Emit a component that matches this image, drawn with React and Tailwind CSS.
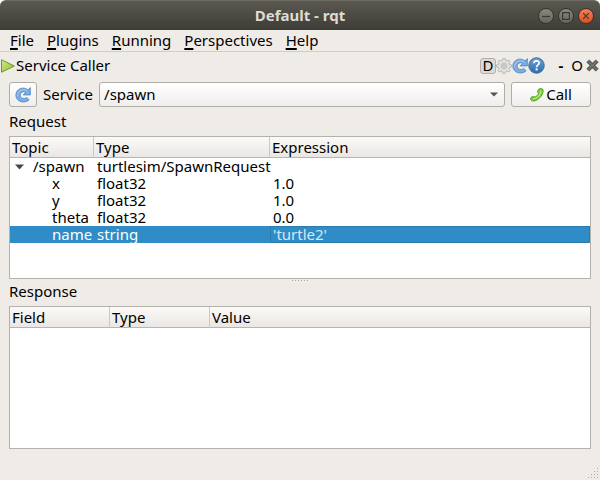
import clsx from "clsx";

const menus = ["File", "Plugins", "Running", "Perspectives", "Help"];

const requestRows = [
  { topic: "x", type: "float32", expression: "1.0" },
  { topic: "y", type: "float32", expression: "1.0" },
  { topic: "theta", type: "float32", expression: "0.0" },
  { topic: "name", type: "string", expression: "'turtle2'", selected: true },
];

const ReloadIcon = () => (
  <svg width="16" height="16" viewBox="0 0 16 16" aria-hidden="true">
    <path
      d="M15.300.6v7.300H8.200l2.500-2.400C8.600 3.900 5.200 5.100 5.200 8.200c0 3.300 4 4.300 6.600 2.300l2.300 2.400C9.300 17 .9 14.800.9 8.200.9 1.500 8.700-.9 13 3z"
      fill="#7cafe0"
      stroke="#4f89c6"
      strokeWidth="0.900"
      strokeLinejoin="round"
    />
    <path
      d="M2.600 9.500C1.700 4 7.500.9 12.200 3.900"
      fill="none"
      stroke="#a9cdf0"
      strokeWidth="1"
    />
  </svg>
);

const GearIcon = () => (
  <svg width="16" height="16" viewBox="0 0 16 16" aria-hidden="true">
    <g fill="#e2e2e0" stroke="#a9a9a7" strokeWidth="0.800" strokeLinejoin="round">
      <path d="M6.900.6h2.200l.5 1.900 1.100.5 1.800-1L14 3.500l-1 1.800.5 1.100 1.900.5v2.200l-1.900.5-.5 1.100 1 1.800-1.500 1.500-1.800-1-1.100.5-.5 1.900H6.900l-.5-1.900-1.100-.5-1.800 1L2 12.500l1-1.800-.5-1.100L.6 9.100V6.900l1.900-.5.5-1.100-1-1.800L3.500 2l1.800 1 1.100-.5z" />
      <circle cx="8" cy="8" r="3" fill="#d3d3d1" stroke="#bcbcba" />
      <circle cx="8" cy="8" r="1.300" fill="#f6f6f4" />
    </g>
  </svg>
);

const HelpIcon = () => (
  <svg width="17" height="17" viewBox="0 0 17 17" aria-hidden="true">
    <defs>
      <linearGradient id="help" x1="0" y1="0" x2="0" y2="1">
        <stop offset="0" stopColor="#6ea3d6" />
        <stop offset="1" stopColor="#2f6ca8" />
      </linearGradient>
    </defs>
    <circle cx="8.500" cy="8.500" r="7.700" fill="url(#help)" stroke="#34699f" />
    <path
      d="M5.900 6.300c0-3.300 5.300-3.300 5.300-.3 0 2-2.600 1.900-2.600 4.200"
      fill="none"
      stroke="#fff"
      strokeWidth="1.700"
    />
    <rect x="7.600" y="11.400" width="2" height="2" fill="#fff" />
  </svg>
);

const CloseIcon = () => (
  <svg width="13" height="13" viewBox="0 0 13 13" aria-hidden="true">
    <path d="M1.800 1.800l9.400 9.400M11.200 1.800l-9.400 9.400" stroke="#555753" strokeWidth="4" />
    <path d="M2.200 2.200l8.600 8.600M10.800 2.200l-8.600 8.600" stroke="#70726e" strokeWidth="1.800" />
  </svg>
);

const PlayIcon = () => (
  <svg width="16" height="16" viewBox="0 0 16 16" aria-hidden="true">
    <defs>
      <linearGradient id="play" x1="0" y1="0" x2="1" y2="1">
        <stop offset="0" stopColor="#d3e88c" />
        <stop offset="1" stopColor="#8fbf2a" />
      </linearGradient>
    </defs>
    <path
      d="M1.500 1.800v12.400L14.400 8z"
      fill="url(#play)"
      stroke="#6c9a2c"
      strokeLinejoin="round"
    />
  </svg>
);

const PhoneIcon = () => (
  <svg width="14" height="14" viewBox="0 0 14 14" aria-hidden="true">
    <path
      d="M8.800 1.200c1.400-1 3.900-.7 4.300.8.500 4.400-4 10-9 11-1.800.3-3.600-.6-3.600-2.200.1-1.900 2.800-2.900 4.500-1.700C6.700 8.200 8 6.900 8.600 5.300 7.200 4.500 7.200 2.200 8.800 1.200z"
      fill="#7ed03a"
      stroke="#4a9a1c"
      strokeWidth="0.900"
    />
    <path
      d="M10.800 2.500c.5 3.300-2.900 7.300-7.500 8.700"
      fill="none"
      stroke="#b4ec7c"
      strokeWidth="1.200"
    />
  </svg>
);

const WindowButton = ({ label, close, children }) => (
  <button
    aria-label={label}
    className={clsx(
      "flex size-4 items-center justify-center rounded-full border border-[#35342f]",
      close
        ? "bg-linear-to-b from-[#f37e54] to-[#e2501d]"
        : "bg-linear-to-b from-[#8a887f] to-[#66655e]"
    )}
  >
    <svg
      width="8"
      height="8"
      viewBox="0 0 8 8"
      fill="none"
      stroke="#3a3934"
      strokeWidth="1.200"
      className="shrink-0"
    >
      {children}
    </svg>
  </button>
);

const TitleBar = () => (
  <header className="grid h-[30px] shrink-0 grid-cols-[1fr_auto_1fr] items-center rounded-t-md border-t border-[#6b6960] bg-linear-to-b from-[#5b5950] to-[#3d3c37] px-[6px]">
    <span />
    <h1 className="font-bold text-[#dfdbd2]">Default - rqt</h1>
    <div className="flex justify-end gap-1">
      <WindowButton label="Minimize">
        <path d="M0 4.500h8" />
      </WindowButton>
      <WindowButton label="Maximize">
        <path d="M.6.6h6.800v6.800H.6z" />
      </WindowButton>
      <WindowButton label="Close" close>
        <path d="M1.200 1.200l5.600 5.600M6.800 1.200L1.200 6.800" />
      </WindowButton>
    </div>
  </header>
);

const MenuBar = () => (
  <nav className="flex h-[22px] shrink-0 items-center gap-[13px] border-b border-[#d0cdc9] px-[10px]">
    {menus.map((menu) => (
      <button key={menu}>
        <span className="underline decoration-2 underline-offset-2 [text-decoration-skip-ink:none]">
          {menu[0]}
        </span>
        {menu.slice(1)}
      </button>
    ))}
  </nav>
);

const DockTitle = () => (
  <div className="flex h-[27px] items-center">
    <PlayIcon />
    <h2 className="flex-1">Service Caller</h2>
    <div className="flex items-center pr-px">
      <button className="flex size-4 items-center justify-center rounded-[3px] border border-[#b3b0ac] bg-[#dddad6]">
        D
      </button>
      <button aria-label="Settings">
        <GearIcon />
      </button>
      <button aria-label="Reload">
        <ReloadIcon />
      </button>
      <button aria-label="Help">
        <HelpIcon />
      </button>
      <button className="ml-2 w-4 font-bold">-</button>
      <button className="w-4">O</button>
      <button aria-label="Close plugin" className="ml-px">
        <CloseIcon />
      </button>
    </div>
  </div>
);

const buttonStyle =
  "flex h-[25px] items-center justify-center rounded-[3px] border border-[#b0aca8] bg-linear-to-b from-white to-[#f0eeec]";

const CallerBar = () => (
  <div className="flex items-center px-[9px] py-[3px]">
    <button aria-label="Refresh services" className={clsx(buttonStyle, "w-7")}>
      <ReloadIcon />
    </button>
    <label htmlFor="service" className="mx-[6px]">
      Service
    </label>
    <div className="relative flex-1">
      <select
        id="service"
        className="block h-[25px] w-full appearance-none rounded-[3px] border border-[#b0aca8] bg-linear-to-b from-white to-[#f0eeec] pl-1"
      >
        <option>/spawn</option>
      </select>
      <svg
        width="8"
        height="5"
        viewBox="0 0 8 5"
        className="pointer-events-none absolute top-[10px] right-[7px]"
      >
        <path d="M0 .5h8L4 4.500z" fill="#55534f" />
      </svg>
    </div>
    <button className={clsx(buttonStyle, "ml-[6px] w-20 gap-[2px]")}>
      <PhoneIcon />
      Call
    </button>
  </div>
);

const TreeHead = ({ columns }) => (
  <thead>
    <tr className="h-[21px] bg-linear-to-b from-[#fcfaf8] to-[#e9e5e2]">
      {columns.map((column) => (
        <th
          key={column}
          className="border-r border-b border-[#b8b4b0] border-r-[#cbc8c5] pl-[2px] text-left font-normal last:border-r-0"
        >
          {column}
        </th>
      ))}
    </tr>
  </thead>
);

const Tree = ({ title, columns, widths, children }) => (
  <section className="flex flex-col">
    <h3 className="mb-[6px] leading-[18px]">{title}</h3>
    <div className="flex-1 border border-[#b5b2ae] bg-white">
      <table className="w-full table-fixed border-separate border-spacing-0">
        <colgroup>
          {widths.map((width, i) => (
            <col key={i} className={width} />
          ))}
        </colgroup>
        <TreeHead columns={columns} />
        {children}
      </table>
    </div>
  </section>
);

const RequestBody = () => (
  <tbody>
    <tr className="h-[17px]">
      <td>
        <div className="flex items-center pl-[5px]">
          <svg width="9" height="6" viewBox="0 0 9 6" className="mr-[9px]">
            <path d="M0 .5h9L4.500 5.500z" fill="#4a4844" />
          </svg>
          /spawn
        </div>
      </td>
      <td className="pl-[3px]">turtlesim/SpawnRequest</td>
      <td />
    </tr>
    {requestRows.map((row) => (
      <tr
        key={row.topic}
        className={clsx("h-[17px]", row.selected && "bg-[#308cc6] text-white")}
      >
        <td className="pl-[42px]">{row.topic}</td>
        <td className="pl-[3px]">{row.type}</td>
        <td
          className={clsx(
            "pl-[3px]",
            row.selected && "text-[#d6e8f4] shadow-[inset_0_0_0_1px_#2a7bae]"
          )}
        >
          {row.expression}
        </td>
      </tr>
    ))}
  </tbody>
);

const SplitHandle = () => (
  <div className="flex h-[3px] items-center justify-center gap-[2px]">
    {[0, 1, 2, 3, 4, 5].map((dot) => (
      <span key={dot} className="size-px bg-[#a9a6a2]" />
    ))}
  </div>
);

const SizeGrip = () => (
  <svg width="11" height="11" viewBox="0 0 11 11" fill="#b0ada9">
    <path d="M9 0h1v1H9zM6 3h1v1H6zM9 3h1v1H9zM3 6h1v1H3zM6 6h1v1H6zM9 6h1v1H9zM0 9h1v1H0zM3 9h1v1H3zM6 9h1v1H6zM9 9h1v1H9z" />
  </svg>
);

const App = () => (
  <div className="bg-white">
    <div className="flex min-h-screen flex-col rounded-t-md bg-[#efebe7] font-['Noto_Sans',sans-serif] text-[15px] leading-[17px] text-black">
      <TitleBar />
      <MenuBar />
      <DockTitle />
      <CallerBar />
      <main className="grid flex-1 grid-rows-[1fr_auto_1fr] px-[9px] pt-[2px]">
        <Tree
          title="Request"
          columns={["Topic", "Type", "Expression"]}
          widths={["w-[84px]", "w-[176px]", "w-auto"]}
        >
          <RequestBody />
        </Tree>
        <SplitHandle />
        <Tree
          title="Response"
          columns={["Field", "Type", "Value"]}
          widths={["w-[100px]", "w-[100px]", "w-auto"]}
        />
      </main>
      <footer className="flex h-[31px] shrink-0 items-end justify-end pr-px pb-px">
        <SizeGrip />
      </footer>
    </div>
  </div>
);

export default App;
